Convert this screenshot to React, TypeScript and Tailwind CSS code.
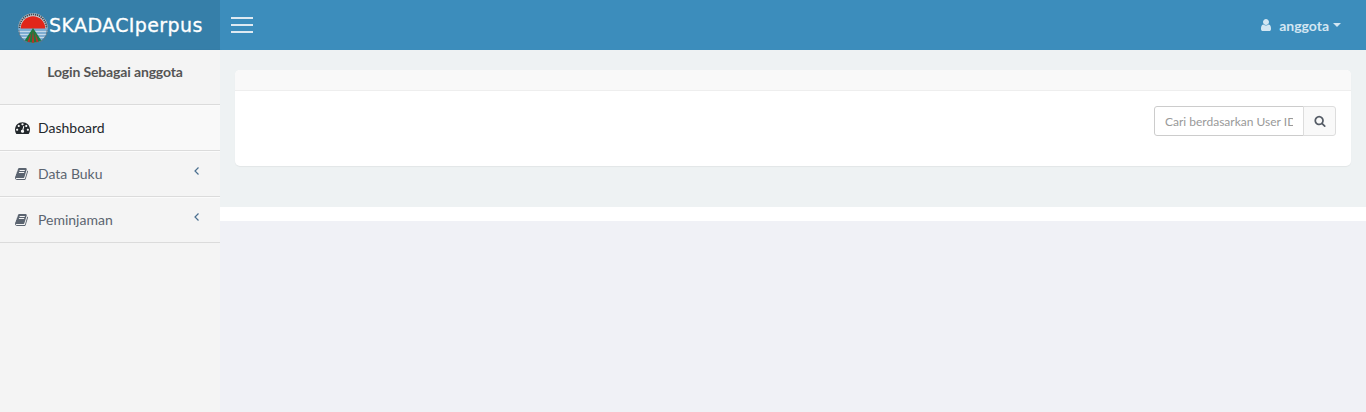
import React from "react";

function Logo() {
  return (
    <svg viewBox="0 0 30 30" className="mt-[6px] h-[30px] w-[30px] shrink-0">
      <defs>
        <clipPath id="disc">
          <circle cx="15" cy="15" r="14.800" />
        </clipPath>
      </defs>
      <g clipPath="url(#disc)">
        <rect x="0" y="0" width="30" height="15" fill="#c9ced3" />
        <rect x="0" y="15" width="30" height="15" fill="#7fadd2" />
        <path d="M2.800 15.500a12.200 12.200 0 0 1 24.400 0z" fill="#e1261a" />
        <rect x="0" y="18" width="30" height="1" fill="#c4d9ea" />
        <rect x="0" y="21" width="30" height="1" fill="#c4d9ea" />
        <rect x="0" y="24" width="30" height="1" fill="#c4d9ea" />
        <path d="M15 15L5 30H25z" fill="#1e7a3e" />
        <path d="M15 17L13.800 30H16.200z" fill="#b8322a" />
        <path d="M13 20L9 30H11.500z" fill="#b8322a" />
        <path d="M17 20L21 30H18.500z" fill="#b8322a" />
      </g>
      <path d="M1.400 15a13.600 13.600 0 0 1 27.200 0" fill="none" stroke="#3f4a55" strokeWidth="1.800" strokeDasharray="1.400 0.700" />
      <path d="M0.800 17a14.200 14.200 0 0 0 28.400 0" fill="none" stroke="#66757f" strokeWidth="0.800" />
    </svg>
  );
}

function DashboardIcon() {
  return (
    <svg viewBox="0 0 1792 1792" className="h-[15px] w-[15px]" fill="currentColor">
      <path d="M384 1152q0-53-37.5-90.5t-90.5-37.5-90.5 37.5-37.5 90.5 37.5 90.5 90.5 37.5 90.5-37.5 37.5-90.5zm192-448q0-53-37.5-90.5t-90.5-37.5-90.5 37.5-37.5 90.5 37.5 90.5 90.5 37.5 90.5-37.5 37.5-90.5zm428 481l101-382q6-26-7.5-48.5t-38.5-29.5-48 6.5-30 39.5l-101 382q-60 5-107 43.5t-63 98.5q-20 77 20 146t117 89 146-20 89-117q16-60-6-117t-72-91zm660-33q0-53-37.5-90.5t-90.5-37.5-90.5 37.5-37.5 90.5 37.5 90.5 90.5 37.5 90.5-37.5 37.5-90.5zm-640-640q0-53-37.5-90.5t-90.5-37.5-90.5 37.5-37.5 90.5 37.5 90.5 90.5 37.5 90.5-37.5 37.5-90.5zm448 192q0-53-37.5-90.5t-90.5-37.5-90.5 37.5-37.5 90.5 37.5 90.5 90.5 37.5 90.5-37.5 37.5-90.5zm320 448q0 261-141 483-19 29-54 29h-1402q-35 0-54-29-141-221-141-483 0-182 71-348t191-286 286-191 348-71 348 71 286 191 191 286 71 348z" />
    </svg>
  );
}

function BookIcon() {
  return (
    <svg viewBox="0 0 1792 1792" className="h-[14px] w-[14px]" fill="currentColor">
      <path d="M1639 478q40 57 18 129l-275 906q-19 64-76.500 107.500t-122.500 43.500h-923q-77 0-148.500-53.500t-99.500-131.500q-24-67-2-127 0-4 3-27t4-37q1-8-3-21.500t-3-19.500q2-11 8-21t16.500-23.500 16.500-23.500q23-38 45-91.500t30-91.500q3-10 .5-30t-.5-28q3-11 17-28t17-23q21-36 42-92t25-90q1-9-2.500-32t.5-28q4-13 22-30.500t22-22.500q19-26 42.500-84.500t27.500-96.500q1-8-3-25.500t-2-26.500q2-8 9-18t18-23 17-21q8-12 16.500-30.500t15-35 16-36 19.500-32 26.500-23.500 36-11.500 47.500 5.500l-1 3q38-9 51-9h761q74 0 114 56t18 130l-274 906q-36 119-71.500 153.500t-128.500 34.500h-869q-27 0-38 15-11 16-1 43 24 70 144 70h923q29 0 56-15.500t35-41.500l300-987q7-22 5-57 38 15 59 43zm-1064 2q-4 13 2 22.500t20 9.500h608q13 0 25.500-9.500t16.500-22.500l21-64q4-13-2-22.500t-20-9.500h-608q-13 0-25.500 9.500t-16.500 22.500zm-83 256q-4 13 2 22.500t20 9.500h608q13 0 25.500-9.500t16.500-22.500l21-64q4-13-2-22.500t-20-9.500h-608q-13 0-25.500 9.500t-16.500 22.500z" />
    </svg>
  );
}

function UserIcon() {
  return (
    <svg viewBox="0 0 1792 1792" className="mr-[6px] h-[14px] w-[14px]" fill="currentColor">
      <path d="M1536 1399q0 109-62.500 187t-150.500 78h-854q-88 0-150.500-78t-62.500-187q0-85 8.500-160.500t31.500-152 58.500-131 94-89 134.500-34.500q131 128 313 128t313-128q76 0 134.500 34.500t94 89 58.500 131 31.500 152 8.500 160.500zm-256-887q0 159-112.500 271.500t-271.500 112.500-271.500-112.500-112.500-271.500 112.500-271.500 271.500-112.500 271.500 112.500 112.500 271.500z" />
    </svg>
  );
}

function SearchIcon() {
  return (
    <svg viewBox="0 0 1792 1792" className="h-[12px] w-[12px]" fill="currentColor">
      <path d="M1216 832q0-185-131.500-316.500t-316.500-131.500-316.500 131.500-131.500 316.500 131.500 316.500 316.500 131.500 316.500-131.500 131.500-316.500zm512 832q0 52-38 90t-90 38q-54 0-90-38l-343-342q-179 124-399 124-143 0-273.500-55.500t-225-150-150-225-55.500-273.500 55.500-273.500 150-225 225-150 273.500-55.500 273.500 55.500 225 150 150 225 55.500 273.500q0 220-124 399l343 343q37 37 37 90z" />
    </svg>
  );
}

function MenuRow({
  icon,
  label,
  active,
  chevron,
}: {
  icon: React.ReactNode;
  label: string;
  active?: boolean;
  chevron?: boolean;
}) {
  return (
    <li className={`flex h-[46px] items-center border-b border-[#dbdbdb] pl-[15px] pr-[19px] text-[14px] shadow-[inset_0_1px_0_#fbfbfb] ${active ? "bg-[#f9f9f9] text-[#23282c]" : "bg-[#f4f4f4] text-[#5b6470]"}`}>
      <span className="flex w-[23px] shrink-0 items-center">{icon}</span>
      <span className="flex-1">{label}</span>
      {chevron && (
        <svg viewBox="0 0 8 10" className="mb-[5px] h-[10px] w-[8px]" fill="none" stroke="#4a6f8f" strokeWidth="1.200">
          <path d="M5.500 1.500L2 5L5.500 8.500" />
        </svg>
      )}
    </li>
  );
}

export default function App() {
  return (
    <div className="flex h-[412px] w-[1366px] flex-col overflow-hidden font-['Lato','Open_Sans',sans-serif] text-[14px]">
      <header className="flex h-[50px] shrink-0 bg-[#3c8dbc]">
        <div className="flex w-[220px] items-center bg-[#367fa9] pl-[18px]">
          <Logo />
          <span className="ml-px font-['DejaVu_Sans',sans-serif] text-[19px] tracking-[0.4px] text-white [-webkit-text-stroke:0.3px_white]">SKADACIperpus</span>
        </div>
        <button className="ml-[11px] flex flex-col gap-[5px] self-center">
          <span className="block h-[2px] w-[22px] bg-[#dfeaf2]" />
          <span className="block h-[2px] w-[22px] bg-[#dfeaf2]" />
          <span className="block h-[2px] w-[22px] bg-[#dfeaf2]" />
        </button>
        <div className="ml-auto flex items-center pr-[25px] font-bold text-[#d3e6f2]">
          <UserIcon />
          <span>anggota</span>
          <span className="ml-[4px] h-0 w-0 border-x-[4px] border-t-[4px] border-x-transparent border-t-[#d3e6f2]" />
        </div>
      </header>
      <div className="flex min-h-0 flex-1">
        <aside className="w-[220px] shrink-0 bg-[#f4f4f4] shadow-[1px_0_2px_rgba(0,0,0,0.04)]">
          <div className="h-[55px] border-b border-[#dbdbdb] pl-[10px] pt-[11px] text-center font-bold tracking-[-0.15px] text-[#555]">
            Login Sebagai anggota
          </div>
          <ul>
            <MenuRow icon={<DashboardIcon />} label="Dashboard" active />
            <MenuRow icon={<BookIcon />} label="Data Buku" chevron />
            <MenuRow icon={<BookIcon />} label="Peminjaman" chevron />
          </ul>
        </aside>
        <main className="flex min-w-0 flex-1 flex-col bg-[#f0f1f6]">
          <div className="h-[157px] bg-[#eef2f3] px-[15px] pt-[20px]">
            <div className="h-[96px] overflow-hidden rounded-[5px] bg-white shadow-[0_1px_1px_rgba(0,0,0,0.05)]">
              <div className="h-[21px] border-b border-[#eeeeee] bg-[#f9f9f9]" />
              <div className="flex justify-end pr-[15px] pt-[15px]">
                <input
                  readOnly
                  placeholder="Cari berdasarkan User ID"
                  className="h-[30px] w-[150px] rounded-l-[3px] border border-[#cccccc] px-[10px] text-[12px] outline-none placeholder:text-[#999999]"
                />
                <button className="ml-[-1px] flex h-[30px] w-[33px] items-center justify-center rounded-r-[3px] border border-[#dddddd] bg-[#f9f9f9] text-[#555c66]">
                  <SearchIcon />
                </button>
              </div>
            </div>
          </div>
          <div className="h-[14px] shrink-0 bg-white" />
        </main>
      </div>
    </div>
  );
}
